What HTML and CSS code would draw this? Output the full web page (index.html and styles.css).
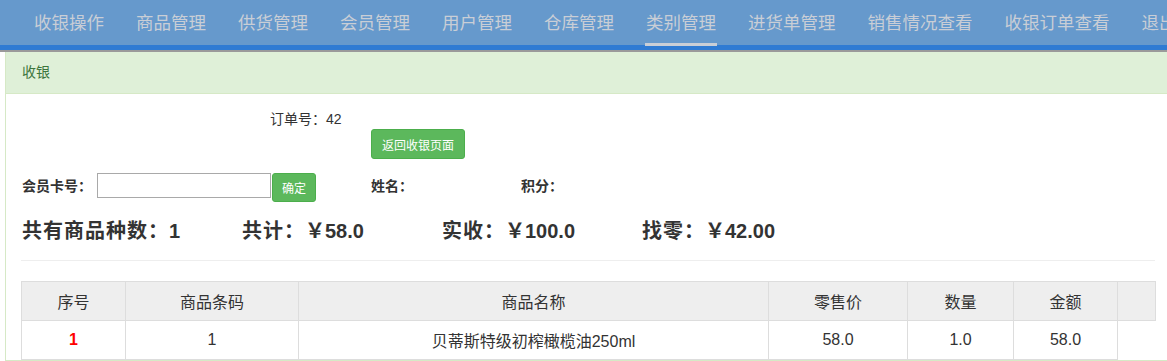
FILE: index.html
```html
<!DOCTYPE html>
<html lang="zh-CN">
<head>
    <meta charset="UTF-8">
    <title>收银</title>
    <link rel="stylesheet" href="styles.css">
</head>
<body>
    <div class="navbar">
        <ul class="nav">
            <li><a href="#">收银操作</a></li>
            <li><a href="#">商品管理</a></li>
            <li><a href="#">供货管理</a></li>
            <li><a href="#">会员管理</a></li>
            <li><a href="#">用户管理</a></li>
            <li><a href="#">仓库管理</a></li>
            <li class="active"><a href="#">类别管理</a></li>
            <li><a href="#">进货单管理</a></li>
            <li><a href="#">销售情况查看</a></li>
            <li><a href="#">收银订单查看</a></li>
            <li><a href="#">退出</a></li>
        </ul>
    </div>

    <div class="panel">
        <div class="panel-heading">收银</div>
        <div class="panel-body">
            <div class="order-row">订单号：42</div>
            <div class="back-row">
                <button class="btn">返回收银页面</button>
            </div>

            <div class="member-row">
                <div class="member-card">
                    <label>会员卡号：</label>
                    <input type="text" class="card-input">
                    <button class="btn btn-ok">确定</button>
                </div>
                <div class="member-name">姓名：</div>
                <div class="member-points">积分：</div>
            </div>

            <div class="summary">
                <div class="sum-item first"><span class="lbl">共有商品种数：</span>1</div>
                <div class="sum-item"><span class="lbl">共计：</span>￥58.0</div>
                <div class="sum-item"><span class="lbl">实收：</span>￥100.0</div>
                <div class="sum-item"><span class="lbl">找零：</span>￥42.00</div>
            </div>

            <hr class="divider">

            <table class="goods">
                <colgroup>
                    <col style="width:104px">
                    <col style="width:173px">
                    <col style="width:470px">
                    <col style="width:139px">
                    <col style="width:106px">
                    <col style="width:104px">
                    <col style="width:38px">
                </colgroup>
                <thead>
                    <tr>
                        <th>序号</th>
                        <th>商品条码</th>
                        <th>商品名称</th>
                        <th>零售价</th>
                        <th>数量</th>
                        <th>金额</th>
                        <th></th>
                    </tr>
                </thead>
                <tbody>
                    <tr>
                        <td class="idx">1</td>
                        <td>1</td>
                        <td>贝蒂斯特级初榨橄榄油250ml</td>
                        <td>58.0</td>
                        <td>1.0</td>
                        <td>58.0</td>
                    </tr>
                </tbody>
            </table>
        </div>
    </div>
</body>
</html>
```

FILE: styles.css
```css
body {
    margin: 0;
    font-family: "Liberation Sans", "Noto Sans CJK SC", sans-serif;
    font-size: 14px;
    color: #333;
    background: #fff;
    overflow: hidden;
}
.navbar {
    height: 45px;
    background: #6699cc;
    border-bottom: 5px solid #2f7bd3;
    box-shadow: 0 2px 0 #9a9a9a;
}
.nav {
    list-style: none;
    margin: 0;
    padding: 0 0 0 18px;
    display: flex;
    white-space: nowrap;
}
.nav li a {
    display: block;
    padding: 9px 16px 0;
    height: 36px;
    font-size: 17.5px;
    color: #c9ced6;
    text-decoration: none;
}
.nav li.active a {
    position: relative;
}
.nav li.active a::after {
    content: "";
    position: absolute;
    left: 15px;
    right: 15px;
    bottom: -1px;
    height: 3px;
    background: #c9ced6;
}
.panel {
    margin: 2px 0 0 5px;
    width: 1220px;
    border: 1px solid #d6e9c6;
    border-top: none;
}
.panel-heading {
    height: 41px;
    line-height: 41px;
    padding-left: 16px;
    background: #dff0d8;
    color: #3c763d;
    font-size: 14px;
    border-bottom: 1px solid #d6e9c6;
}
.panel-body {
    padding: 16px 16px 0;
}
.order-row {
    padding-left: 248px;
    line-height: 18px;
}
.back-row {
    padding-left: 349px;
    margin-top: 1px;
}
.btn {
    font-family: "Liberation Sans", "Noto Sans CJK SC", sans-serif;
    font-size: 12px;
    font-weight: normal;
    color: #fff;
    background: #5cb85c;
    border: 1px solid #4cae4c;
    border-radius: 3px;
    height: 30px;
    padding: 0 10px;
    cursor: pointer;
}
.member-row {
    display: flex;
    align-items: flex-start;
    margin-top: 14px;
    font-weight: bold;
}
.member-row label,
.member-name,
.member-points {
    line-height: 27px;
}
.member-card {
    display: flex;
    align-items: flex-start;
    width: 349px;
}
.card-input {
    width: 174px;
    height: 25px;
    box-sizing: border-box;
    border: 1px solid #a9a9a9;
    margin: 0 1px 0 5px;
    padding: 0 4px;
}
.btn-ok {
    height: 29px;
    padding: 0 9px;
}
.member-name {
    width: 150px;
}
.summary {
    display: flex;
    margin-top: 14px;
    font-size: 20px;
    font-weight: bold;
    line-height: 30px;
}
.sum-item {
    width: 200px;
}
.sum-item.first {
    width: 220px;
}
.lbl {
    letter-spacing: 1px;
}
.divider {
    border: none;
    border-top: 1px solid #eee;
    margin: 14px -1px 20px;
    width: 1134px;
}
.goods {
    border-collapse: collapse;
    table-layout: fixed;
    width: 1134px;
    margin-left: -1px;
    font-size: 16px;
}
.goods th,
.goods td {
    border: 1px solid #ddd;
    text-align: center;
    font-weight: normal;
    padding: 0;
}
.goods th {
    height: 38px;
    background: #eee;
}
.goods td {
    height: 38px;
}
.goods td.idx {
    color: #f00;
    font-weight: bold;
}
```
